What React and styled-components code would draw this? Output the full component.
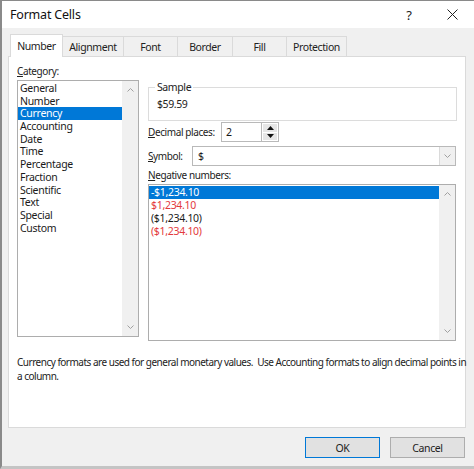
import React from 'react';
import styled, {createGlobalStyle} from 'styled-components';

const Global = createGlobalStyle`
  html, body { margin: 0; padding: 0; background: #f0f0f0; }
  * { box-sizing: border-box; }
  body {
    font-family: "Noto Sans", "Open Sans", sans-serif;
    color: #1a1a1a;
    letter-spacing: -0.4px;
  }
`;

// #region Styled Components
const Window = styled.div`
  width: 474px;
  height: 469px;
  display: flex;
  flex-direction: column;
  border-left: 2px solid #8a8a8a;
  border-top: 1px solid #8a8a8a;
  border-bottom: 3px solid #c4c4c4;
  background: #f0f0f0;
  overflow: hidden;
`;
const TitleBar = styled.div`
  height: 27px;
  flex: none;
  background: #fff;
  display: flex;
  align-items: center;
  padding-left: 8px;
  font-size: 12.5px;
  letter-spacing: -0.2px;
  color: #111;
`;
const Title = styled.div`
  flex: 1;
`;
const TitleButton = styled.div`
  width: ${p => p.w}px;
  height: 27px;
  display: flex;
  align-items: center;
  justify-content: center;
  font-size: 13px;
  color: #222;
`;
const Body = styled.div`
  flex: 1;
  display: flex;
  flex-direction: column;
  padding: 8px 8px 0 6px;
`;
const Tabs = styled.div`
  display: flex;
  height: 20px;
  margin-left: 2px;
  position: relative;
  z-index: 1;
`;
const Tab = styled.div`
  width: ${p => p.w}px;
  display: flex;
  align-items: center;
  justify-content: center;
  font-size: 10.5px;
  color: #222;
  border: 1px solid #dadada;
  border-left: ${p => (p.first ? '1px solid #dadada' : 'none')};
  border-bottom: none;
  background: ${p => (p.active ? '#fff' : '#f0f0f0')};
  height: ${p => (p.active ? '23px' : '20px')};
  margin-top: ${p => (p.active ? '-2px' : '0')};
`;
const Panel = styled.div`
  height: 372px;
  background: #fff;
  border: 1px solid #dadada;
  display: flex;
  flex-direction: column;
  padding: 7px 8px 0 8px;
`;
const Columns = styled.div`
  display: flex;
  gap: 9px;
`;
const LeftCol = styled.div`
  width: 122px;
  display: flex;
  flex-direction: column;
`;
const RightCol = styled.div`
  width: 309px;
  display: flex;
  flex-direction: column;
  padding-top: 16px;
`;
const Label = styled.div`
  font-size: 10px;
  line-height: 15px;
  height: 16px;
  white-space: nowrap;
  color: #222;
  u { text-decoration: underline; text-underline-offset: 1px; }
`;
const ListBox = styled.div`
  height: ${p => p.h}px;
  width: ${p => p.w || 'auto'};
  border: 1px solid #adadad;
  display: flex;
  background: #fff;
`;
const Items = styled.div`
  flex: 1;
  padding-top: 1px;
`;
const Item = styled.div`
  height: ${p => p.rh || 12.7}px;
  line-height: ${p => p.rh || 12.7}px;
  font-size: 10.5px;
  letter-spacing: -0.3px;
  padding-left: 2px;
  white-space: nowrap;
  color: ${p => (p.selected ? '#fff' : p.red ? '#e3393c' : '#1a1a1a')};
  background: ${p => (p.selected ? '#0078d7' : 'transparent')};
`;
const ScrollBar = styled.div`
  width: 16px;
  background: #f0f0f0;
  display: flex;
  flex-direction: column;
  justify-content: space-between;
  align-items: center;
  padding: 7px 0;
`;
const GroupBox = styled.fieldset`
  margin: 0;
  padding: 0 8px 7px 8px;
  border: 1px solid #dcdcdc;
  height: 41px;
  legend {
    font-size: 10.5px;
    padding: 0 2px;
    margin-left: -2px;
    color: #222;
    line-height: 14px;
  }
`;
const SampleValue = styled.div`
  font-size: 10.5px;
  line-height: 14px;
  padding-top: 3px;
  color: #222;
`;
const FieldRow = styled.div`
  display: flex;
  align-items: center;
  height: 20px;
  margin-top: ${p => p.mt}px;
  ${Label} { height: auto; width: ${p => p.lw}px; flex: none; }
`;
const TextBox = styled.div`
  height: 20px;
  width: ${p => p.w}px;
  border: 1px solid #b9b9b9;
  display: flex;
  align-items: center;
  padding-left: 4px;
  font-size: 10.5px;
  background: #fff;
`;
const Spinner = styled.div`
  height: 20px;
  width: 17px;
  border: 1px solid #b9b9b9;
  border-left: none;
  display: flex;
  flex-direction: column;
  padding: 1px;
  gap: 1px;
`;
const SpinBtn = styled.div`
  flex: 1;
  background: #e6e6e6;
  display: flex;
  align-items: center;
  justify-content: center;
`;
const Select = styled.div`
  flex: 1;
  height: 20px;
  border: 1px solid #b9b9b9;
  display: flex;
  font-size: 10.5px;
  margin-right: 1px;
`;
const SelectValue = styled.div`
  flex: 1;
  display: flex;
  align-items: center;
  padding-left: 5px;
`;
const DropBtn = styled.div`
  width: 16px;
  background: #f0f0f0;
  border-left: 1px solid #dadada;
  display: flex;
  align-items: center;
  justify-content: center;
`;
const Description = styled.div`
  margin-top: 14px;
  font-size: 10px;
  line-height: 14px;
  color: #222;
  width: 456px;
  letter-spacing: -0.5px;
`;
const Footer = styled.div`
  display: flex;
  justify-content: flex-end;
  gap: 10px;
  padding: 9px 1px 0 0;
`;
const Button = styled.div`
  width: 75px;
  height: 21px;
  background: #e1e1e1;
  border: 1px solid ${p => (p.focused ? '#0078d7' : '#adadad')};
  display: flex;
  align-items: center;
  justify-content: center;
  font-size: 10.5px;
  color: #222;
`;
// #endregion

const Chevron = ({up}) => (
  <svg width="7" height="4" viewBox="0 0 7 4">
    <path d={up ? 'M0.5 3.5 L3.5 0.5 L6.5 3.5' : 'M0.5 0.5 L3.5 3.5 L6.5 0.5'} fill="none" stroke="#a0a0a0" strokeWidth="1" />
  </svg>
);

const Triangle = ({up}) => (
  <svg width="7" height="4" viewBox="0 0 7 4">
    <path d={up ? 'M0 4 L3.5 0 L7 4 Z' : 'M0 0 L3.5 4 L7 0 Z'} fill="#111" />
  </svg>
);

const categories = ['General', 'Number', 'Currency', 'Accounting', 'Date', 'Time', 'Percentage', 'Fraction', 'Scientific', 'Text', 'Special', 'Custom'];
const tabs = [['Number', 53], ['Alignment', 61], ['Font', 54], ['Border', 55], ['Fill', 54], ['Protection', 60]];
const negatives = [
  {text: '-$1,234.10', selected: true},
  {text: '$1,234.10', red: true},
  {text: '($1,234.10)'},
  {text: '($1,234.10)', red: true},
];

export default function App() {
  return (
    <>
      <Global />
      <Window>
        <TitleBar>
          <Title>Format Cells</Title>
          <TitleButton w={42}>?</TitleButton>
          <TitleButton w={44}>
            <svg width="11" height="11" viewBox="0 0 11 11">
              <path d="M0.5 0.5 L10.5 10.5 M10.5 0.5 L0.5 10.5" stroke="#222" strokeWidth="1" />
            </svg>
          </TitleButton>
        </TitleBar>
        <Body>
          <Tabs>
            {tabs.map(([name, w], i) => (
              <Tab key={name} w={w} first={i === 0} active={i === 0}>{name}</Tab>
            ))}
          </Tabs>
          <Panel>
            <Columns>
              <LeftCol>
                <Label><u>C</u>ategory:</Label>
                <ListBox h={257}>
                  <Items>
                    {categories.map(c => (
                      <Item key={c} selected={c === 'Currency'}>{c}</Item>
                    ))}
                  </Items>
                  <ScrollBar>
                    <Chevron up />
                    <Chevron />
                  </ScrollBar>
                </ListBox>
              </LeftCol>
              <RightCol>
                <GroupBox>
                  <legend>Sample</legend>
                  <SampleValue>$59.59</SampleValue>
                </GroupBox>
                <FieldRow mt={1} lw={73}>
                  <Label><u>D</u>ecimal places:</Label>
                  <TextBox w={41}>2</TextBox>
                  <Spinner>
                    <SpinBtn><Triangle up /></SpinBtn>
                    <SpinBtn><Triangle /></SpinBtn>
                  </Spinner>
                </FieldRow>
                <FieldRow mt={4} lw={44}>
                  <Label><u>S</u>ymbol:</Label>
                  <Select>
                    <SelectValue>$</SelectValue>
                    <DropBtn><Chevron /></DropBtn>
                  </Select>
                </FieldRow>
                <Label style={{marginTop: 2}}><u>N</u>egative numbers:</Label>
                <ListBox h={157} w="308px">
                  <Items>
                    {negatives.map((n, i) => (
                      <Item key={i} rh={13} selected={n.selected} red={n.red}>{n.text}</Item>
                    ))}
                  </Items>
                  <ScrollBar>
                    <Chevron up />
                    <Chevron />
                  </ScrollBar>
                </ListBox>
              </RightCol>
            </Columns>
            <Description>
              Currency formats are used for general monetary values.&nbsp; Use Accounting formats to align decimal points in a column.
            </Description>
          </Panel>
          <Footer>
            <Button focused>OK</Button>
            <Button>Cancel</Button>
          </Footer>
        </Body>
      </Window>
    </>
  );
}
